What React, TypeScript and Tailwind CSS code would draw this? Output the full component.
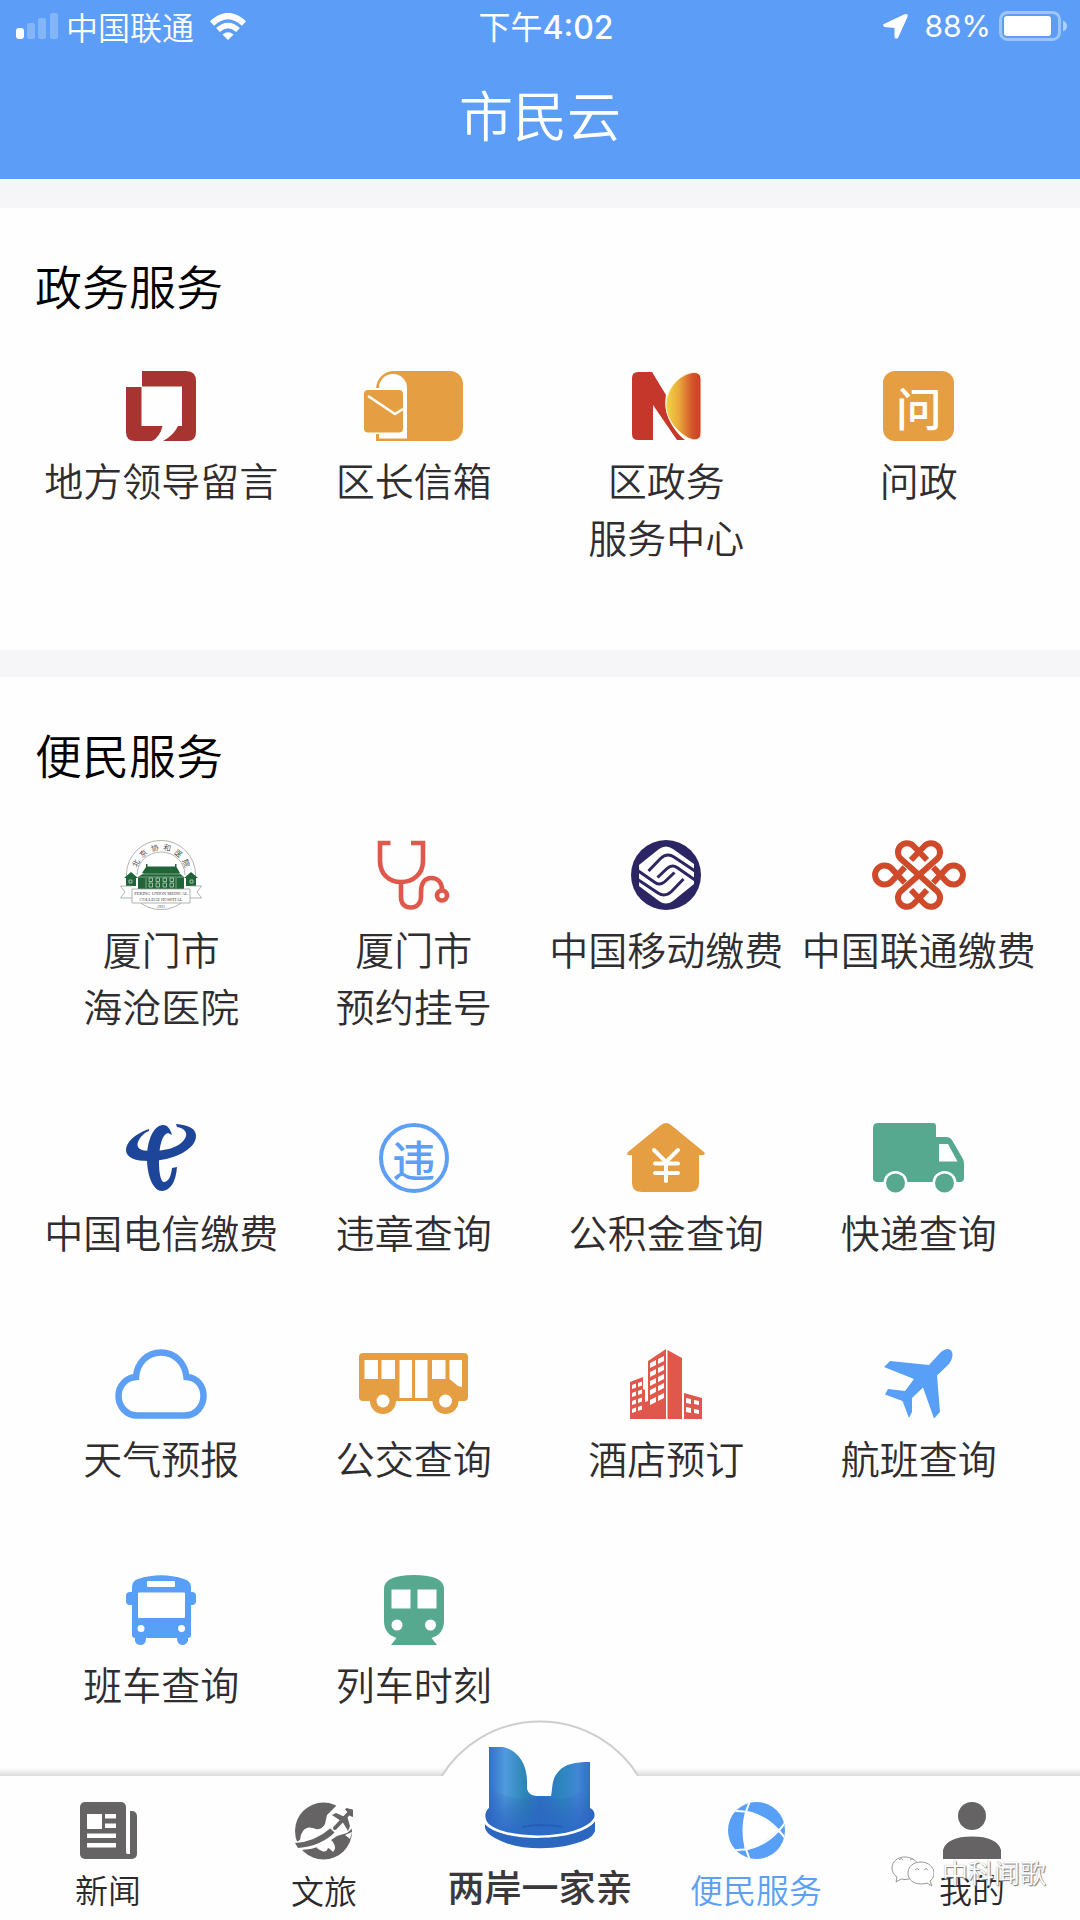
import type { ReactNode } from 'react';

const AMBER = '#E59E42';
const BLUE = '#5C9FF5';
const GREEN = '#56A98F';
const RED = '#E0574C';
const GRAY = '#656364';

/* ---------- service icons ---------- */

function LeaderMessageIcon() {
  return (
    <svg width="70" height="70" viewBox="0 0 70 70" fill="#A83431" aria-hidden="true">
      <path d="M16 0H60Q70 0 70 10V61Q70 70 61 70H37Q48 64 52 55H56V15.5H16Z" />
      <path d="M0 16H15.5V55H36.5Q34 66 26 70H9Q0 70 0 61Z" />
    </svg>
  );
}

function MailboxIcon() {
  return (
    <svg width="99" height="70" viewBox="0 0 99 70" aria-hidden="true">
      <path fill={AMBER} d="M12 70V18A18 18 0 0 1 30 0H86A13 13 0 0 1 99 13V57A13 13 0 0 1 86 70Z" />
      <path fill="#fff" d="M15 67.5V17A14 14 0 0 1 43 17V67.5Z" />
      <path fill="#fff" d="M0 17H41V63H0Z" />
      <rect fill={AMBER} x="0" y="19" width="39" height="42.5" rx="4" />
      <path fill="none" stroke="#fff" strokeWidth="2.5" d="M4 25L31 43L39 38" />
    </svg>
  );
}

function GovCenterIcon() {
  return (
    <svg width="69" height="70" viewBox="0 0 69 70" aria-hidden="true">
      <defs>
        <linearGradient id="sun" x1="0" x2="1" y1="0" y2="0">
          <stop offset="0" stopColor="#F3D548" />
          <stop offset="0.35" stopColor="#E9AC3B" />
          <stop offset="0.75" stopColor="#D4552A" />
          <stop offset="1" stopColor="#CB3D27" />
        </linearGradient>
      </defs>
      <path fill="#C5362B" d="M0 7Q0 1 6 1H20L34 24C31 39 38 57 53 69H45L21 34V69H6Q0 69 0 63Z" />
      <path
        fill="url(#sun)"
        stroke="#FDF3C8"
        strokeWidth="1"
        d="M61 1.5Q69 1 69 8V62Q69 69 62 69Q56 68 50 63C38 53 34 43 34 34C34 20 45 4 61 1.5Z"
      />
    </svg>
  );
}

function AskIcon() {
  return (
    <span className="flex h-[70px] w-[71px] items-center justify-center rounded-xl bg-[#E59E42] text-[46px] leading-none font-medium text-white">
      问
    </span>
  );
}

function HospitalIcon() {
  const motto = ['北', '京', '协', '和', '医', '院'];
  return (
    <svg width="82" height="70" viewBox="0 0 82 70" aria-hidden="true">
      <circle cx="41" cy="35" r="34.6" fill="#fff" stroke="#9AA49D" strokeWidth="0.8" />
      <path d="M17 35A24 23 0 0 1 65 35" fill="none" stroke="#9AA49D" strokeWidth="0.8" />
      {motto.map((c, i) => (
        <text
          key={c}
          x="41"
          y="10"
          fontSize="7.5"
          textAnchor="middle"
          fill="#333"
          transform={`rotate(${-65 + i * 26} 41 35)`}
        >
          {c}
        </text>
      ))}
      <g fill="#1F6537">
        <path d="M22 33L26 27V24H27.5V26.5H55V24H56.5V27L60 33Z" />
        <path d="M18 37L24 33H59L64 37V50H18Z" />
        <path d="M4 38L11 32L18 38H16V46H6V38Z" />
        <path d="M64 38L71 32L78 38H76V46H66V38Z" />
      </g>
      <path d="M18 37H64M26 38V48M56 38V48M22 34H60" stroke="#A6C4AF" strokeWidth="0.7" />
      <g fill="none" stroke="#BFD5C5" strokeWidth="0.8">
        <path d="M29 38h3.5v3.5h-3.5zM36 38h3.5v3.5h-3.5zM43 38h3.5v3.5h-3.5zM50 38h3.5v3.5h-3.5z" />
        <path d="M29 43h3.5v4h-3.5zM36 43h3.5v4h-3.5zM43 43h3.5v4h-3.5zM50 43h3.5v4h-3.5z" />
        <path d="M9 40h3v3h-3zM70 40h3v3h-3z" />
      </g>
      <path
        d="M12 46H0.5L5 52L0.5 58H12M70 46H81.5L77 52L81.5 58H70M12 49H70V63H12Z"
        fill="#fff"
        stroke="#9AA49D"
        strokeWidth="0.8"
      />
      <g fontFamily="Liberation Serif, serif" fontWeight="400" textAnchor="middle" fill="#444">
        <text x="41" y="54.5" fontSize="4.5">PEKING UNION MEDICAL</text>
        <text x="41" y="61" fontSize="4.5">COLLEGE HOSPITAL</text>
        <text x="41" y="68" fontSize="4">1921</text>
      </g>
    </svg>
  );
}

function StethoscopeIcon() {
  return (
    <svg width="73" height="70" viewBox="0 0 73 70" fill="none" stroke={RED} strokeWidth="4.6" aria-hidden="true">
      <path d="M13.5 3H3V21C3 34 12 42 24 42C36 42 46 34 46 21V3H34" />
      <path d="M24 42V57C24 64 28 67.5 34 67.5C40 67.5 44 63 44 57V52C44 43 48 38 54 38C61 38 65 43 65 50" />
      <circle cx="65" cy="55.5" r="5" />
    </svg>
  );
}

function ChinaMobileIcon() {
  return (
    <svg width="70" height="70" viewBox="0 0 70 70" aria-hidden="true">
      <circle cx="35" cy="35" r="35" fill="#2B2563" />
      <path fill="#fff" d="M8 25L28 9Q35 4 42 9L63 24V44L42 61Q35 66 28 61L8 46Z" />
      <g fill="none" stroke="#2B2563" strokeWidth="3">
        <path d="M17.5 31L29.5 18.5Q36 12.5 43 17L64 31" />
        <path d="M26.5 37.5L36 28.5Q41 24 46 27.5L64 40" />
        <path d="M52.5 39L40.5 51.5Q34 57.5 27 53L6 39" />
        <path d="M43.5 32.5L34 41.5Q29 46 24 42.5L6 30" />
      </g>
    </svg>
  );
}

function ChinaUnicomIcon() {
  const loop = 'M47 35L28.5 18.5A9 9 0 1 1 41.5 6L55 20';
  return (
    <svg width="94" height="70" viewBox="0 0 94 70" fill="none" stroke="#CF4A2B" strokeWidth="6" aria-hidden="true">
      <path d="M33 27L19 42A9.5 9.5 0 1 1 19 28L33 43" />
      <path d="M61 27L75 42A9.5 9.5 0 1 0 75 28L61 43" />
      <path d="M30 19L64 51M64 19L30 51" stroke="#fff" strokeWidth="8" />
      <path d={loop} />
      <path d={loop} transform="matrix(-1 0 0 1 94 0)" />
      <path d={loop} transform="matrix(1 0 0 -1 0 70)" />
      <path d={loop} transform="matrix(-1 0 0 -1 94 70)" />
    </svg>
  );
}

function ChinaTelecomIcon() {
  return (
    <svg width="70" height="70" viewBox="0 -1 70 70" fill="#1D459A" aria-hidden="true">
      <path d="M23 5C8 10 0 19 0 26C0 34 10 37 22 37C48 37 70 25 70 12C70 4 62 1 50 0L51 3C58 4 61 8 60 12C57 22 42 27 25 27C14 27 10 24 12 18C14 13 18 9 23 7Z" />
      <path d="M46 11C44 4 41 1 37 1C28 1 21 16 21 34C21 54 28 67 36 67C44 67 50 58 51 43L46 44C45 53 42 58 38 58C35 58 33 50 33 38C33 22 36 10 42 9Z" />
    </svg>
  );
}

function ViolationIcon() {
  return (
    <span className="flex size-[70px] items-center justify-center rounded-full border-4 border-[#5C9FF5] text-[43px] leading-none font-medium text-[#5C9FF5]">
      违
    </span>
  );
}

function HousingFundIcon() {
  return (
    <svg width="78" height="70" viewBox="0 0 78 70" aria-hidden="true">
      <path fill={AMBER} d="M34 2Q39 -2 44 2L77 29Q80 33 72 32V60Q72 69 62 69H15Q5 69 5 60V32Q-2 33 1 29Z" />
      <path
        fill="none"
        stroke="#fff"
        strokeWidth="4"
        strokeLinecap="round"
        d="M27 27L39 39L51 27M28 40.5H51M28 50H51M39 40V58"
      />
    </svg>
  );
}

function TruckIcon() {
  return (
    <svg width="91" height="70" viewBox="0 0 91 70" aria-hidden="true">
      <path fill={GREEN} d="M5 0H60Q63 0 63 3V14H73Q77 14 79 17L90 36Q91 38 91 41V55Q91 59 87 59H4Q0 59 0 55V5Q0 0 5 0Z" />
      <path fill="#fff" d="M66 21H75L84.5 38.5H66Z" />
      <circle cx="22.5" cy="60" r="12" fill="#fff" />
      <circle cx="71.5" cy="60" r="12" fill="#fff" />
      <circle cx="22.5" cy="60" r="9.5" fill={GREEN} />
      <circle cx="71.5" cy="60" r="9.5" fill={GREEN} />
    </svg>
  );
}

function CloudIcon() {
  return (
    <svg width="92" height="70" viewBox="0 0 92 70" fill="none" stroke={BLUE} strokeWidth="6.5" aria-hidden="true">
      <path d="M22 66.5H70C81 66.5 88.5 57 88.5 47C88.5 37 82 28.5 71.5 28C70 14 60 3.5 46 3.5C32 3.5 22 14 21 28C11 28.5 3.5 37 3.5 47C3.5 57 11 66.5 22 66.5Z" />
    </svg>
  );
}

function CityBusIcon() {
  return (
    <svg width="109" height="70" viewBox="0 -4 109 70" aria-hidden="true">
      <path fill={AMBER} d="M4 0H105Q109 0 109 4V44Q109 48 105 48H4Q0 48 0 44V4Q0 0 4 0Z" />
      <circle cx="24" cy="48" r="13" fill={AMBER} />
      <circle cx="86.5" cy="48" r="13" fill={AMBER} />
      <g fill="#fff">
        <circle cx="24" cy="48" r="6.5" />
        <circle cx="86.5" cy="48" r="6.5" />
        <path d="M5.5 7H19V26H5.5ZM22.5 7H36V26H22.5ZM40.5 7H53V45H40.5ZM56 7H68.5V45H56ZM73 7H86.5V26H73ZM90.5 7H103V34L99 33L90.5 26Z" />
      </g>
    </svg>
  );
}

function HotelIcon() {
  return (
    <svg width="72" height="70" viewBox="0 0 72 70" aria-hidden="true">
      <g fill={RED}>
        <path d="M0 33L13 28V40L15 41V53L18 52V12L36 0V70H0Z" />
        <path d="M37.5 1L52 9V70H37.5Z" />
        <path d="M54 44L72 49V70H54Z" />
      </g>
      <g fill="#fff">
        {[14, 23, 32, 41, 51].map((y) => (
          <path key={y} d={`M20 ${y}l6 -3v5l-6 3zM28 ${y - 4}l6 -3v5l-6 3z`} />
        ))}
        {[36, 44, 52, 60].map((y) => (
          <path key={y} d={`M2 ${y}l4 -1.5v4l-4 1.5zM8 ${y - 2}l4 -1.5v4l-4 1.5z`} />
        ))}
        {[49, 58].map((y) => (
          <path key={y} d={`M56 ${y}l5 1v5l-5 -1zM64 ${y + 2}l5 1v4l-5 -1z`} />
        ))}
      </g>
    </svg>
  );
}

function PlaneIcon() {
  return (
    <svg width="69" height="70" viewBox="0 0 69 70" fill="#589FF7" aria-hidden="true">
      <path d="M56 4Q60 0 64 0Q69 1 68.5 7Q68 11 65 15L53 26.5L56 63L50 69.5L39 38.5L28 49V63L25 69L18.5 52L1 45.5L4 40L21 42L30 30L0 18L6 12L45 16Z" />
    </svg>
  );
}

function CoachIcon() {
  return (
    <svg width="70" height="70" viewBox="0 0 70 70" aria-hidden="true">
      <g fill="#589FF7">
        <path d="M6 12Q6 6 12 4Q35 -3.5 58 4Q65 6 65 12V60Q65 63 62 63V66Q60 70 56.5 70Q51 70 51 63H20Q20 70 15 70Q10 70 9 66V63Q6 63 6 60Z" />
        <rect x="0" y="17" width="10" height="13" rx="4" />
        <rect x="60" y="17" width="10" height="13" rx="4" />
      </g>
      <g fill="#fff">
        <rect x="21" y="6" width="28" height="6" rx="1" />
        <rect x="12" y="17.5" width="47" height="25.5" rx="1" />
        <circle cx="15" cy="53.5" r="3.5" />
        <circle cx="55.5" cy="53.5" r="3.5" />
      </g>
    </svg>
  );
}

function TrainIcon() {
  return (
    <svg width="60" height="70" viewBox="0 0 60 70" aria-hidden="true">
      <path fill={GREEN} d="M0 14Q0 0 30 0Q60 0 60 14V46Q60 59 47.5 63L53 70H7L12.5 63Q0 59 0 46Z" />
      <g fill="#fff">
        <path d="M7.5 14.5H26.5V33.5H7.5ZM33.5 14.5H52.5V33.5H33.5Z" />
        <circle cx="13" cy="50" r="5.5" />
        <circle cx="46.5" cy="50" r="5.5" />
      </g>
    </svg>
  );
}

/* ---------- tab icons ---------- */

function NewsIcon() {
  return (
    <svg width="57" height="57" viewBox="0 0 57 57" aria-hidden="true">
      <rect fill={GRAY} x="20" y="9" width="37" height="48" rx="5" />
      <rect fill={GRAY} width="46" height="57" rx="5" />
      <path fill="#fff" d="M46 6H50V52H47.5Q46 52 46 50Z" />
      <path fill="#fff" d="M7 12H22V27H7ZM25 12H36V16.5H25ZM25 21.5H36V26H25ZM7 31.5H36V36H7ZM7 41H36V45.5H7Z" />
    </svg>
  );
}

function TravelIcon() {
  return (
    <svg width="58" height="58" viewBox="0 0 58 58" aria-hidden="true">
      <circle cx="28.5" cy="29" r="28.5" fill={GRAY} />
      <path fill="#fff" d="M42 3L32 13L30 22Q27 28 21 27Q12 23 8 29Q5 33 5 38L-2 42V48L6 48Q24 48 42 34L52 31L60 24V0Z" />
      <path fill="#fff" d="M23 43L30 39Q36 36 38 40Q42 46 38 50Q34 46 33 46Q31 52 25 48Q20 46 23 43ZM50 33L57 30L55 37Z" />
      <path fill={GRAY} d="M0 41Q20 40 37 25L41 29Q27 44 3 46Z" />
      <path d="M38 29L54 12" stroke="#fff" strokeWidth="8" />
      <path d="M40 26L56 9" stroke={GRAY} strokeWidth="4" strokeLinecap="round" />
      <path fill={GRAY} d="M37 13L41 11L50 15L46 19ZM53 29L55 24L52 14L47 19ZM50 7L52 6L58 8V15L55 14Z" />
    </svg>
  );
}

function ServiceIcon() {
  return (
    <svg width="57" height="57" viewBox="0 0 57 57" aria-hidden="true">
      <clipPath id="disc">
        <circle cx="28.5" cy="28.5" r="28.5" />
      </clipPath>
      <g clipPath="url(#disc)">
        <path fill="#589FF7" d="M0 0H57V57H0Z" />
        <path fill="#fff" d="M18 9Q36 14 50 28.5Q36 43 17 49Q13 28 18 9Z" />
        <path
          fill="none"
          stroke="#fff"
          strokeWidth="2"
          d="M22 -1Q9 28 22 58M7 9Q36 8 57 36M7 48Q36 49 57 21"
        />
      </g>
    </svg>
  );
}

function PersonIcon() {
  return (
    <svg width="58" height="57" viewBox="0 0 58 57" fill={GRAY} aria-hidden="true">
      <circle cx="29" cy="14" r="14" />
      <path d="M0 57V48Q4 34.5 29 34.5Q54 34.5 58 48V57Z" />
    </svg>
  );
}

function StraitLogo() {
  return (
    <svg width="110" height="102" viewBox="0 0 110 102" aria-hidden="true">
      <defs>
        <linearGradient id="horn" x1="0" x2="1" y1="0" y2="0">
          <stop offset="0" stopColor="#2A66C2" />
          <stop offset="0.18" stopColor="#4F9BDD" />
          <stop offset="0.36" stopColor="#2C86B5" />
          <stop offset="0.5" stopColor="#2F6FC6" />
          <stop offset="0.7" stopColor="#2C86BE" />
          <stop offset="0.85" stopColor="#4285D6" />
          <stop offset="1" stopColor="#2F66C0" />
        </linearGradient>
        <linearGradient id="seat" x1="0" x2="0" y1="0" y2="1">
          <stop offset="0" stopColor="#2A62BD" stopOpacity="0" />
          <stop offset="0.5" stopColor="#2A62BD" stopOpacity="0.5" />
          <stop offset="1" stopColor="#2C6BCB" />
        </linearGradient>
      </defs>
      <path
        fill="url(#horn)"
        d="M4 0H18C32 3 42 16 42 34V42Q44 49 52 49H66C68 40 66 32 74 24C80 17 90 15 105 15V61C112 64 110 74 104 79C85 93 25 93 6 79C-1 74 -1 65 4 61Z"
      />
      <path fill="url(#seat)" d="M4 40Q30 56 42 50H68Q80 56 105 40V61C112 64 110 74 104 79C85 93 25 93 6 79C-1 74 -1 65 4 61Z" />
      <path fill="none" stroke="#1F57AE" strokeWidth="2" opacity="0.6" d="M37 80Q55 76 78 80" />
      <path fill="#2B66BF" d="M0 77C15 95 95 95 110 74C113 83 108 90 100 93C75 104 35 104 14 93C3 88 -1 83 0 77Z" />
      <path fill="none" stroke="#fff" strokeWidth="2.5" d="M0 75C14 95 96 95 110 72" />
    </svg>
  );
}

/* ---------- status bar ---------- */

function StatusBar() {
  return (
    <div className="grid h-[52px] grid-cols-[1fr_auto_1fr] items-center text-[32px] leading-none">
      <div className="flex items-center pl-4">
        <svg width="42" height="26" viewBox="0 0 42 26" fill="#fff" aria-hidden="true">
          <rect x="0" y="15" width="8" height="11" rx="3" />
          <g opacity="0.25">
            <rect x="11" y="10" width="8" height="16" rx="2.5" />
            <rect x="22" y="5" width="8" height="21" rx="2.5" />
            <rect x="34" y="0" width="8" height="26" rx="2.5" />
          </g>
        </svg>
        <span className="ml-2">中国联通</span>
        <svg className="ml-4" width="36" height="27" viewBox="0 0 36 27" fill="none" stroke="#fff" strokeWidth="6" aria-hidden="true">
          <path d="M2 10.5Q18 -4.5 34 10.5" />
          <path d="M8 17Q18 8 28 17" strokeWidth="5.5" />
          <path d="M12.5 21.5Q18 17 23.5 21.5L18 27Z" fill="#fff" stroke="none" />
        </svg>
      </div>
      <div className="pl-3 font-normal">
        下午<span className="font-['Inter',sans-serif] font-medium">4:02</span>
      </div>
      <div className="flex items-center justify-end pr-3">
        <svg width="25" height="25" viewBox="0 0 25 25" fill="#fff" aria-hidden="true">
          <path d="M24.5 0.5Q25 2 24 4L15 24Q12 26 11.5 23V14L1.5 13Q-1 11 1 10L21 0.5Q24 -0.5 24.5 0.5Z" />
        </svg>
        <span className="ml-4 font-['Inter',sans-serif] text-[30px] font-normal">88%</span>
        <svg className="ml-2" width="69" height="30" viewBox="0 0 69 30" aria-hidden="true">
          <rect x="1.5" y="1.5" width="59" height="27" rx="7" fill="none" stroke="#fff" strokeOpacity="0.4" strokeWidth="3" />
          <rect x="5" y="5" width="47" height="20" rx="3" fill="#fff" />
          <path d="M64 9.5Q68 11 68 15Q68 19 64 20.5Z" fill="#fff" fillOpacity="0.5" />
        </svg>
      </div>
    </div>
  );
}

/* ---------- content ---------- */

type Service = { lines: string[]; icon: ReactNode };

const government: Service[] = [
  { lines: ['地方领导留言'], icon: <LeaderMessageIcon /> },
  { lines: ['区长信箱'], icon: <MailboxIcon /> },
  { lines: ['区政务', '服务中心'], icon: <GovCenterIcon /> },
  { lines: ['问政'], icon: <AskIcon /> },
];

const convenience: Service[] = [
  { lines: ['厦门市', '海沧医院'], icon: <HospitalIcon /> },
  { lines: ['厦门市', '预约挂号'], icon: <StethoscopeIcon /> },
  { lines: ['中国移动缴费'], icon: <ChinaMobileIcon /> },
  { lines: ['中国联通缴费'], icon: <ChinaUnicomIcon /> },
  { lines: ['中国电信缴费'], icon: <ChinaTelecomIcon /> },
  { lines: ['违章查询'], icon: <ViolationIcon /> },
  { lines: ['公积金查询'], icon: <HousingFundIcon /> },
  { lines: ['快递查询'], icon: <TruckIcon /> },
  { lines: ['天气预报'], icon: <CloudIcon /> },
  { lines: ['公交查询'], icon: <CityBusIcon /> },
  { lines: ['酒店预订'], icon: <HotelIcon /> },
  { lines: ['航班查询'], icon: <PlaneIcon /> },
  { lines: ['班车查询'], icon: <CoachIcon /> },
  { lines: ['列车时刻'], icon: <TrainIcon /> },
];

function Section({ title, services }: { title: string; services: Service[] }) {
  return (
    <section className="pt-[47px] pr-[35px] pb-[85px] pl-[35px]">
      <h2 className="text-[47px] leading-[60px] text-black">{title}</h2>
      <div className="mt-[56px] grid grid-cols-4 gap-y-[89px]">
        {services.map((s) => (
          <a key={s.lines.join('')} href="#" className="flex flex-col items-center gap-[10px]">
            {s.icon}
            <span className="flex flex-col items-center text-[39px] leading-[57px] whitespace-nowrap text-[#2F2D30]">
              {s.lines.map((line) => (
                <span key={line}>{line}</span>
              ))}
            </span>
          </a>
        ))}
      </div>
    </section>
  );
}

function Tab({ label, icon, active }: { label: string; icon: ReactNode; active?: boolean }) {
  return (
    <a
      href="#"
      aria-current={active ? 'page' : undefined}
      className={`flex flex-col items-center gap-2 pt-[26px] text-[33px] leading-[44px] ${
        active ? 'text-[#5C9FF5]' : 'text-[#2B292C]'
      }`}
    >
      {icon}
      {label}
    </a>
  );
}

function TabBar() {
  return (
    <nav className="sticky bottom-0">
      <div className="absolute inset-x-0 -top-2 h-2 bg-linear-to-t from-[#DDDBDD] to-transparent" />
      <svg className="absolute -top-[56px] left-1/2 -translate-x-1/2" width="200" height="58" viewBox="0 0 200 58" aria-hidden="true">
        <path d="M1 58A115 115 0 0 1 199 58Z" fill="#fefefe" />
        <path d="M1 57A116 116 0 0 1 199 57" fill="none" stroke="#CFCDCF" strokeWidth="2" />
      </svg>
      <div className="relative grid h-36 grid-cols-5 items-start bg-[#fefefe]">
        <Tab label="新闻" icon={<NewsIcon />} />
        <Tab label="文旅" icon={<TravelIcon />} />
        <a
          href="#"
          className="-mt-[29px] flex flex-col items-center gap-[15px] text-[37px] leading-[44px] font-medium whitespace-nowrap text-[#3A383B]"
        >
          <StraitLogo />
          两岸一家亲
        </a>
        <Tab label="便民服务" icon={<ServiceIcon />} active />
        <Tab label="我的" icon={<PersonIcon />} />
        <div className="pointer-events-none absolute right-[34px] bottom-8 flex items-center gap-2">
          <svg width="43" height="32" viewBox="0 0 43 32" fill="#fff" stroke="#9A989A" strokeWidth="1" aria-hidden="true">
            <path d="M14 1C6 1 1 6 1 12C1 16 3 19 6 21L5 26L10 23Q14 24 18 23C24 21 28 17 28 12C28 6 21 1 14 1Z" />
            <path d="M30 6C22 6 17 11 17 17C17 24 23 28 30 28Q33 28 36 27L41 30L39 25C42 23 43 20 43 17C43 11 37 6 30 6Z" />
            <path fill="none" d="M8 4q2 -3 4 0M19 4q2 -3 4 0M24 14q2 -3 4 0M33 14q2 -3 4 0" />
          </svg>
          <span className="text-[26px] leading-[32px] text-white [text-shadow:1px_1px_1px_#777,0_0_1px_#999]">中科闻歌</span>
        </div>
      </div>
    </nav>
  );
}

export default function App() {
  return (
    <div className="flex min-h-screen flex-col bg-[#fefefe] font-['Noto_Sans_CJK_SC',sans-serif] font-[350]">
      <header className="bg-[#5C9DF8] pb-1 text-white">
        <StatusBar />
        <h1 className="text-center text-[54px] leading-[123px] font-[350]">市民云</h1>
      </header>
      <main className="flex-1">
        <div className="mt-[2px] h-[27px] bg-[#F6F5F8]" />
        <Section title="政务服务" services={government} />
        <div className="h-[27px] bg-[#F6F5F8]" />
        <div className="-mb-[85px]">
          <Section title="便民服务" services={convenience} />
        </div>
      </main>
      <TabBar />
    </div>
  );
}
